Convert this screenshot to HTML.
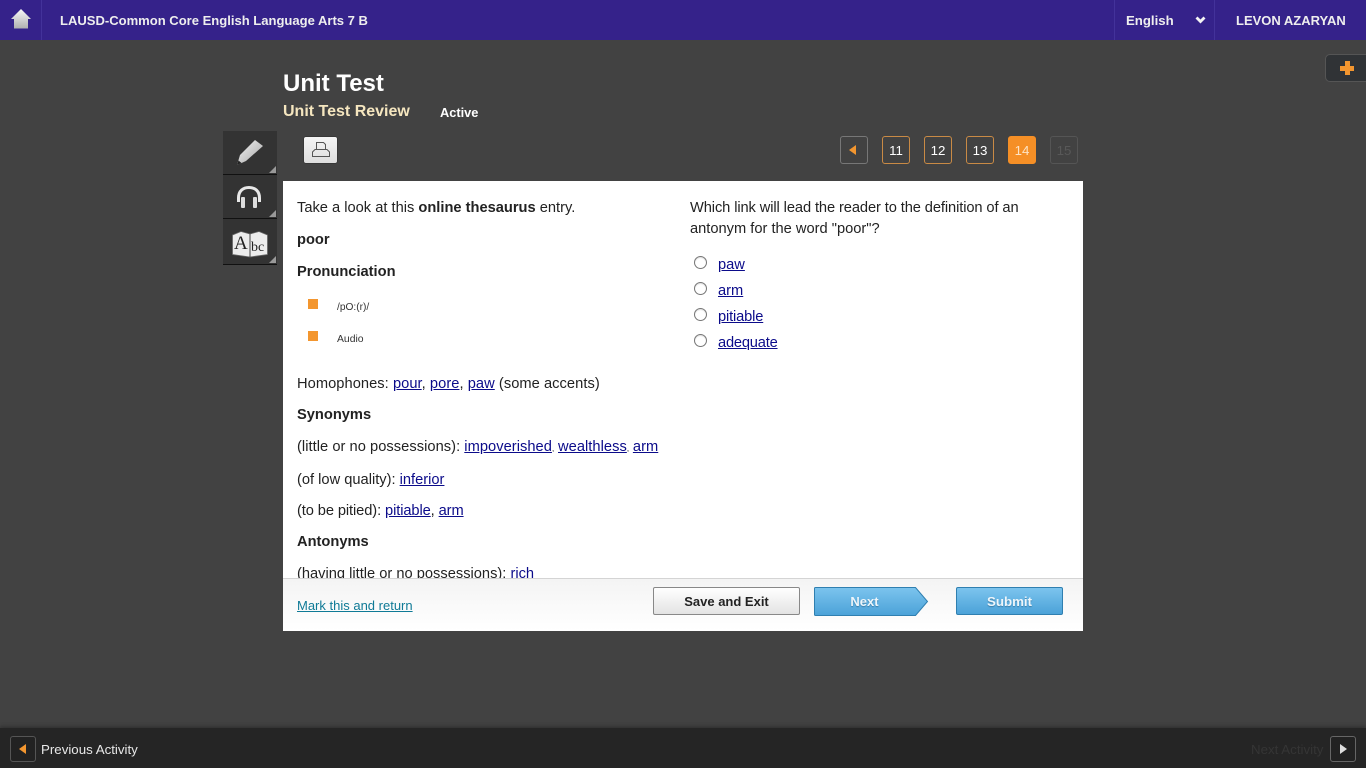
<!DOCTYPE html>
<html><head><meta charset="utf-8"><title>Unit Test</title>
<style>
html,body{margin:0;padding:0;width:1366px;height:768px;overflow:hidden;background:#424242;font-family:"Liberation Sans",sans-serif;color:#222}
.a{position:absolute;white-space:nowrap}
a{color:#0b0b8a;text-decoration:underline}
.t{font-size:14.667px;line-height:20px;color:#222}
b{color:#222}
.pg{position:absolute;top:136px;width:26px;height:26px;border:1px solid #c98a45;border-radius:3px;color:#fff;font-size:13.3px;line-height:27px;text-align:center}
.side{position:absolute;left:223px;width:54px;height:43px;background:#333;border-bottom:1px solid #111}
.corner{position:absolute;right:1px;bottom:1px;width:0;height:0;border-left:7px solid transparent;border-bottom:7px solid #999}
.rad{position:absolute;left:694px;width:13px;height:13px;border:1px solid #777;border-radius:50%;background:#fff;box-sizing:border-box;box-shadow:inset 0 1px 1px #ddd}
.sq{position:absolute;left:308px;width:10px;height:10px;background:#f3962f}
.c{font-size:8px;letter-spacing:.8px}
</style></head><body>
<div class="a" style="left:0;top:0;width:1366px;height:40px;background:#35228a"></div>
<div class="a" style="left:41px;top:0;width:1px;height:40px;background:#43329a"></div>
<div class="a" style="left:1114px;top:0;width:1px;height:40px;background:#43329a"></div>
<div class="a" style="left:1214px;top:0;width:1px;height:40px;background:#43329a"></div>
<svg class="a" style="left:11px;top:8px" width="20" height="22" viewBox="0 0 20 22"><defs><linearGradient id="h" x1="0" y1="0" x2="0" y2="1"><stop offset="0" stop-color="#f8f8f8"/><stop offset="1" stop-color="#b0b0b0"/></linearGradient></defs><path d="M10 1L20 11H17V20.500H3V11H0Z" fill="url(#h)"/></svg>
<div class="a" style="left:60px;top:11px;font-size:13.04px;line-height:20px;font-weight:bold;color:#eee">LAUSD-Common Core English Language Arts 7 B</div>
<div class="a" style="left:1126px;top:11px;font-size:13.2px;line-height:20px;font-weight:bold;color:#eee">English</div>
<svg class="a" style="left:1195px;top:16px" width="11" height="8" viewBox="0 0 11 8"><path d="M1.500 1.500L5.500 5.500L9.500 1.500" fill="none" stroke="#f4f4f4" stroke-width="2.8"/></svg>
<div class="a" style="left:1236px;top:11px;font-size:13px;line-height:20px;font-weight:bold;color:#eee">LEVON AZARYAN</div>

<div class="a" style="left:1325px;top:54px;width:50px;height:28px;background:#303336;border:1px solid #555;border-radius:5px;box-sizing:border-box"></div>
<div class="a" style="left:1340px;top:66px;width:14px;height:5px;background:#f3962f"></div>
<div class="a" style="left:1345px;top:61px;width:5px;height:14px;background:#f3962f"></div>

<div class="a" style="left:283px;top:69px;font-size:24px;line-height:30px;font-weight:bold;color:#fff">Unit Test</div>
<div class="a" style="left:283px;top:101px;font-size:16px;line-height:21px;font-weight:bold;color:#f5e6bf">Unit Test Review</div>
<div class="a" style="left:440px;top:103px;font-size:12.8px;line-height:19px;font-weight:bold;color:#fff">Active</div>

<div class="side" style="top:131px"><svg style="position:absolute;left:13px;top:6px" width="28" height="30" viewBox="0 0 28 30"><defs><linearGradient id="p" x1="0" y1="0" x2="1" y2="1"><stop offset="0" stop-color="#f4f4f4"/><stop offset="1" stop-color="#a5a5a5"/></linearGradient></defs><path d="M19 3L27 9L10 24L1 28L4 18Z" fill="url(#p)"/><path d="M1 28L2.500 23.500L5.500 26Z" fill="#222"/></svg><div class="corner"></div></div>
<div class="side" style="top:175px"><svg style="position:absolute;left:12px;top:9px" width="28" height="26" viewBox="0 0 28 26"><path d="M3.500 18V14C3.500 7 8 3.500 14 3.500S24.500 7 24.500 14V18" fill="none" stroke="#e8e8e8" stroke-width="3"/><rect x="6" y="13" width="4" height="11" rx="1" fill="#ddd"/><rect x="18" y="13" width="4" height="11" rx="1" fill="#ddd"/></svg><div class="corner"></div></div>
<div class="side" style="top:219px;height:45px"><svg style="position:absolute;left:9px;top:12px" width="36" height="27" viewBox="0 0 36 27"><path d="M.5 4L9 .5L18 3L27 .5L35.500 4V23.500L18 26L.5 23.500Z" fill="#ececec" stroke="#666" stroke-width=".8"/><path d="M18 3V26" stroke="#444"/><text x="2" y="18" font-family="Liberation Serif" font-size="19" fill="#222">A</text><text x="19" y="20" font-family="Liberation Serif" font-size="14" fill="#222">bc</text></svg><div class="corner"></div></div>

<div class="a" style="left:304px;top:137px;width:33px;height:26px;background:linear-gradient(#f4f4f4,#dedede);border-radius:2px;box-shadow:0 0 1px #000"></div>
<svg class="a" style="left:311px;top:141px" width="20" height="17" viewBox="0 0 20 17"><path d="M5.500 8.500V1.500H12.500L14.500 3.500V8.500M1.500 15.500V11L4 8.500H16L18.500 11V15.500Z" fill="none" stroke="#555" stroke-width="1"/></svg>

<div class="pg" style="left:840px;border-color:#777"></div>
<div class="a" style="left:849px;top:145px;width:0;height:0;border-top:5px solid transparent;border-bottom:5px solid transparent;border-right:7px solid #f3962f"></div>
<div class="pg" style="left:882px">11</div>
<div class="pg" style="left:924px">12</div>
<div class="pg" style="left:966px">13</div>
<div class="pg" style="left:1008px;background:#f58f26;border-color:#f58f26;color:#fde3c4">14</div>
<div class="pg" style="left:1050px;border-color:#555;color:#585858">15</div>

<div class="a" style="left:283px;top:181px;width:800px;height:450px;background:#fff"></div>
<div class="a t" style="left:297px;top:198px">Take a look at this <b>online thesaurus</b> entry.</div>
<div class="a t" style="left:297px;top:230px"><b>poor</b></div>
<div class="a t" style="left:297px;top:262px"><b>Pronunciation</b></div>
<div class="sq" style="top:299px"></div>
<div class="a" style="left:337px;top:300px;font-size:10.2px;line-height:15px;color:#333">/pO:(r)/</div>
<div class="sq" style="top:331px"></div>
<div class="a" style="left:337px;top:332px;font-size:10.4px;line-height:15px;color:#333">Audio</div>
<div class="a t" style="left:297px;top:374px;letter-spacing:.05px">Homophones: <a>pour</a>, <a>pore</a>, <a>paw</a> (some accents)</div>
<div class="a t" style="left:297px;top:405px"><b>Synonyms</b></div>
<div class="a t" style="left:297px;top:437px;letter-spacing:.04px">(little or no possessions): <a>impoverished</a><span class="c">, </span><a>wealthless</a><span class="c">, </span><a>arm</a></div>
<div class="a t" style="left:297px;top:470px">(of low quality): <a>inferior</a></div>
<div class="a t" style="left:297px;top:501px;letter-spacing:-.1px">(to be pitied): <a>pitiable</a>, <a>arm</a></div>
<div class="a t" style="left:297px;top:532px"><b>Antonyms</b></div>
<div class="a t" style="left:297px;top:564px;height:14px;overflow:hidden">(having little or no possessions): <a>rich</a></div>

<div class="a t" style="left:690px;top:198px;line-height:21px"><span style="letter-spacing:-.1px">Which link will lead the reader to the definition of an</span><br>antonym for the word "poor"?</div>
<div class="rad" style="top:256px"></div><div class="a t" style="left:718px;top:255px"><a>paw</a></div>
<div class="rad" style="top:282px"></div><div class="a t" style="left:718px;top:281px"><a>arm</a></div>
<div class="rad" style="top:308px"></div><div class="a t" style="left:718px;top:307px;letter-spacing:-.15px"><a>pitiable</a></div>
<div class="rad" style="top:334px"></div><div class="a t" style="left:718px;top:333px;letter-spacing:-.2px"><a>adequate</a></div>

<div class="a" style="left:283px;top:578px;width:800px;height:53px;background:linear-gradient(#f4f4f4,#fff);border-top:1px solid #d4d4d4;box-sizing:border-box"></div>
<div class="a" style="left:297px;top:596px;font-size:13px;line-height:19px"><a style="color:#0f7a96">Mark this and return</a></div>
<div class="a" style="left:653px;top:587px;width:147px;height:28px;box-sizing:border-box;border:1px solid #888;border-radius:2px;background:linear-gradient(#fff,#e3e3e3);font-size:13px;font-weight:bold;line-height:28px;text-align:center;color:#222">Save and Exit</div>
<svg class="a" style="left:814px;top:587px" width="115" height="29" viewBox="0 0 115 29"><defs><linearGradient id="b" x1="0" y1="0" x2="0" y2="1"><stop offset="0" stop-color="#7cc4ee"/><stop offset="1" stop-color="#4ba2d8"/></linearGradient></defs><path d="M1.500.5H101.500L113.500 14.500L101.500 28.500H1.500Q.5 28.500 .5 27.500V1.500Q.5.5 1.500.5Z" fill="url(#b)" stroke="#2f7fb0"/></svg>
<div class="a" style="left:814px;top:588px;width:101px;font-size:13px;font-weight:bold;line-height:28px;text-align:center;color:#eef6fb;text-shadow:0 1px 1px #3a7da8">Next</div>
<div class="a" style="left:956px;top:587px;width:107px;height:28px;box-sizing:border-box;border:1px solid #2f7fb0;border-radius:2px;background:linear-gradient(#7cc4ee,#4ba2d8);font-size:13.3px;font-weight:bold;line-height:28px;text-align:center;color:#eef6fb;text-shadow:0 1px 1px #3a7da8">Submit</div>

<div class="a" style="left:0;top:728px;width:1366px;height:40px;background:#252525;box-shadow:0 -2px 3px #333"></div>
<div class="a" style="left:10px;top:736px;width:26px;height:26px;box-sizing:border-box;border:1px solid #555;border-radius:3px;background:#222"></div>
<div class="a" style="left:19px;top:744px;width:0;height:0;border-top:5px solid transparent;border-bottom:5px solid transparent;border-right:7px solid #f3962f"></div>
<div class="a" style="left:41px;top:740px;font-size:13.3px;line-height:20px;color:#e8e8e8">Previous Activity</div>
<div class="a" style="left:1251px;top:740px;font-size:13.3px;line-height:20px;color:#353535">Next Activity</div>
<div class="a" style="left:1330px;top:736px;width:26px;height:26px;box-sizing:border-box;border:1px solid #666;border-radius:3px;background:#222"></div>
<div class="a" style="left:1340px;top:744px;width:0;height:0;border-top:5px solid transparent;border-bottom:5px solid transparent;border-left:7px solid #ddd"></div>
</body></html>
